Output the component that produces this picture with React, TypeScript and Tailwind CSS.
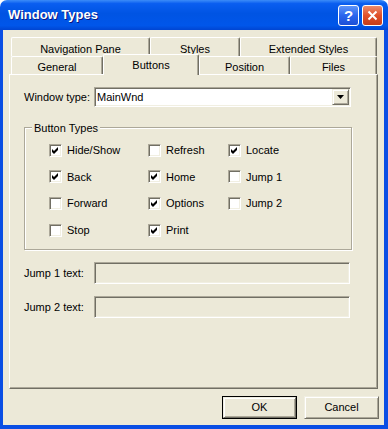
import React from 'react';

const font = { fontFamily: '"Liberation Sans", Arial, sans-serif' };

const sunken =
  'border border-t-[#ACA899] border-l-[#ACA899] border-r-white border-b-white shadow-[inset_1px_1px_0_#716F64,inset_-1px_-1px_0_#F1EFE2]';
const raised =
  'border border-t-[#F1EFE2] border-l-[#F1EFE2] border-r-[#716F64] border-b-[#716F64] shadow-[inset_1px_1px_0_#fff,inset_-1px_-1px_0_#ACA899]';

function Check({ checked, label }: { checked?: boolean; label: string }) {
  return (
    <div className="flex items-center h-[26.67px]">
      <div className={`w-[13px] h-[13px] bg-white shrink-0 ${sunken}`}>
        {checked && (
          <svg width="11" height="11" viewBox="0 0 11 11" className="block">
            <path d="M2 4 L4 6 L8 2 L8 5 L4 9 L2 7 Z" fill="#000" />
          </svg>
        )}
      </div>
      <span className="ml-[5px] text-[11px] text-black">{label}</span>
    </div>
  );
}

function Tab({
  label,
  w,
  h = 'h-[19px]',
  selected,
  textPad = 'pt-[3px]',
}: {
  label: string;
  w: string;
  h?: string;
  selected?: boolean;
  textPad?: string;
}) {
  return (
    <div
      className={`${w} ${h} ${textPad} bg-[#ECE9D8] border-t border-l border-t-white border-l-white border-r border-r-[#716F64] shadow-[inset_-1px_0_0_#ACA899] rounded-t-[2px] text-center text-[11px] text-black ${
        selected ? 'relative z-10 -mb-[1px]' : ''
      }`}
    >
      {label}
    </div>
  );
}

export default function App() {
  return (
    <div className="w-[388px] h-[429px] flex flex-col bg-white" style={font}>
      {/* title bar */}
      <div className="h-[30px] shrink-0 rounded-t-[7px] flex items-center pl-[8px] pr-[5px] bg-[linear-gradient(to_bottom,#3C8CF8_0%,#0A5EF0_12%,#0054E3_45%,#0056EA_85%,#0045D2_100%)]">
        <span className="text-white font-bold text-[13px] [text-shadow:1px_1px_0_#0A1883] flex-1">
          Window Types
        </span>
        <div className="w-[21px] h-[21px] rounded-[3px] border border-white bg-[linear-gradient(to_bottom,#5E94F8,#2A66EE_50%,#1C4FD6)] flex items-center justify-center text-white font-bold text-[15px] leading-none">
          ?
        </div>
        <div className="ml-[3px] w-[21px] h-[21px] rounded-[3px] border border-white bg-[linear-gradient(to_bottom,#EC8C6C,#E0502A_50%,#C73D1A)] flex items-center justify-center">
          <svg width="11" height="11" viewBox="0 0 11 11">
            <path d="M1.5 1.5 L9.5 9.5 M9.5 1.5 L1.5 9.5" stroke="#fff" strokeWidth="2" />
          </svg>
        </div>
      </div>

      {/* body */}
      <div className="flex-1 flex flex-col bg-[#ECE9D8] border-l-[3px] border-r-[4px] border-b-[4px] border-[#0A4EE4] pt-[7px] pl-[6px] pr-[2px] pb-[6px]">
        {/* back tab row */}
        <div className="flex ml-[2px] h-[19px]">
          <Tab label="Navigation Pane" w="w-[139px]" />
          <Tab label="Styles" w="w-[90px]" />
          <Tab label="Extended Styles" w="w-[137px]" />
        </div>
        {/* front tab row */}
        <div className="flex items-end ml-[2px] h-[18px]">
          <Tab label="General" w="w-[92px]" h="h-[18px]" textPad="pt-[2px]" />
          <Tab label="Buttons" w="w-[96px]" h="h-[21px]" textPad="pt-[2px]" selected />
          <Tab label="Position" w="w-[91px]" h="h-[18px]" textPad="pt-[2px]" />
          <Tab label="Files" w="w-[87px]" h="h-[18px]" textPad="pt-[2px]" />
        </div>

        {/* panel */}
        <div className="w-[369px] h-[315px] border-t border-l border-t-white border-l-white border-r border-b border-r-[#716F64] border-b-[#716F64] shadow-[inset_-1px_-1px_0_#ACA899] pl-[14px] pt-[12px] text-[11px] text-black">
          <div className="flex items-center h-[20px]">
            <span className="w-[70px]">Window type:</span>
            <div className={`w-[257px] h-[20px] bg-white flex items-center ${sunken}`}>
              <span className="flex-1 pl-[2px]">MainWnd</span>
              <div className={`w-[17px] h-[16px] mr-[1px] bg-[#ECE9D8] flex items-center justify-center ${raised}`}>
                <svg width="7" height="4" viewBox="0 0 7 4">
                  <path d="M0 0 H7 L3.5 4 Z" fill="#000" />
                </svg>
              </div>
            </div>
          </div>

          <div className="relative mt-[20px] w-[328px] h-[123px] border border-[#ACA899] shadow-[inset_1px_1px_0_#fff,1px_1px_0_#fff]">
            <span className="absolute -top-[8px] left-[7px] bg-[#ECE9D8] px-[2px]">Button Types</span>
            <div className="flex pl-[24px] pt-[9px]">
              <div className="w-[99px]">
                <Check checked label="Hide/Show" />
                <Check checked label="Back" />
                <Check label="Forward" />
                <Check label="Stop" />
              </div>
              <div className="w-[80px]">
                <Check label="Refresh" />
                <Check checked label="Home" />
                <Check checked label="Options" />
                <Check checked label="Print" />
              </div>
              <div>
                <Check checked label="Locate" />
                <Check label="Jump 1" />
                <Check label="Jump 2" />
              </div>
            </div>
          </div>

          <div className="flex items-center mt-[12px]">
            <span className="w-[70px]">Jump 1 text:</span>
            <div className={`w-[256px] h-[22px] bg-[#ECE9D8] ${sunken}`} />
          </div>
          <div className="flex items-center mt-[12px]">
            <span className="w-[70px]">Jump 2 text:</span>
            <div className={`w-[256px] h-[22px] bg-[#ECE9D8] ${sunken}`} />
          </div>
        </div>

        {/* dialog buttons */}
        <div className="flex justify-end gap-[7px] mt-[7px] pr-[3px] text-[11px] text-black">
          <div className="w-[75px] h-[23px] border border-black">
            <div className={`w-full h-full flex items-center justify-center bg-[#ECE9D8] ${raised}`}>OK</div>
          </div>
          <div className={`w-[75px] h-[23px] flex items-center justify-center bg-[#ECE9D8] ${raised}`}>
            Cancel
          </div>
        </div>
      </div>
    </div>
  );
}
